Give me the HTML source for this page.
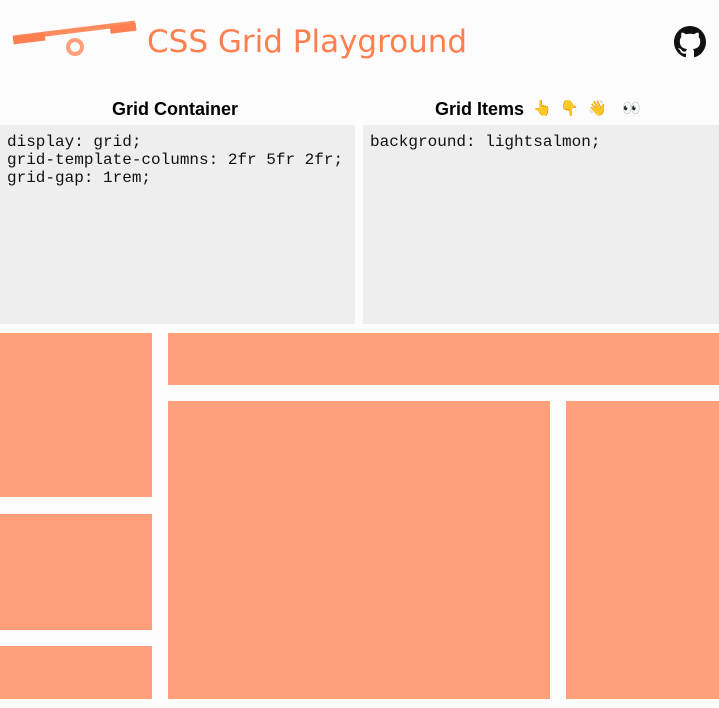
<!DOCTYPE html>
<html><head><meta charset="utf-8"><style>
body{margin:0;width:719px;height:708px;background:#fcfcfc;position:relative;overflow:hidden;font-family:"Liberation Sans",sans-serif}
.a{position:absolute}
.s{background:#ffa07a;position:absolute}
.h{position:absolute;top:99px;font-weight:bold;font-size:18px;color:#000;white-space:nowrap}
.e{position:absolute;top:99px;font-size:15px;font-family:'Noto Color Emoji',sans-serif}
.ta{position:absolute;top:125px;height:199px;background:#eeeeee;font-family:"Liberation Mono",monospace;font-size:16px;line-height:18px;padding:8px 7px;box-sizing:border-box;color:#111;white-space:pre}
</style></head><body>
<svg class="a" style="left:10px;top:18px" width="130" height="45" viewBox="0 0 130 45">
<path d="M3 20 L125 5" stroke="#ff8c5f" stroke-width="5" fill="none"/>
<rect x="3" y="17" width="32" height="8" fill="#ff7f50" transform="rotate(-7 15 20)"/>
<rect x="100" y="6" width="26" height="8" fill="#ff7f50" transform="rotate(-7 115 9)"/>
<circle cx="65" cy="29" r="7" stroke="#ffa07a" stroke-width="4" fill="none"/>
</svg>
<div class="a" style="left:147px;top:24px;font-family:'Comic Sans MS','DejaVu Sans',cursive;font-size:31px;color:#ff7f50">CSS Grid Playground</div>
<svg class="a" style="left:674px;top:26px" width="32" height="32" viewBox="0 0 16 16"><path fill="#111" d="M8 0C3.58 0 0 3.58 0 8c0 3.540 2.29 6.53 5.47 7.59.4.07.55-.17.55-.38 0-.19-.01-.82-.01-1.49-2.01.37-2.53-.49-2.690-.94-.09-.23-.48-.94-.82-1.13-.28-.15-.68-.52-.01-.53.63-.01 1.08.58 1.23.82.72 1.21 1.87.87 2.33.66.07-.52.28-.87.51-1.07-1.78-.2-3.64-.89-3.64-3.95 0-.87.31-1.59.82-2.15-.08-.2-.36-1.02.08-2.12 0 0 .67-.21 2.2.82.64-.18 1.32-.27 2-.27.68 0 1.36.09 2 .27 1.53-1.04 2.2-.82 2.2-.82.44 1.1.16 1.920.08 2.12.51.56.82 1.27.82 2.15 0 3.07-1.87 3.75-3.65 3.95.29.25.54.73.54 1.48 0 1.07-.01 1.93-.01 2.2 0 .21.15.46.55.38A8.013 8.013 0 0016 8c0-4.42-3.58-8-8-8z"/></svg>
<div class="h" style="left:112px">Grid Container</div>
<div class="h" style="left:435px">Grid Items</div>
<span class="e" style="left:533px">👆</span>
<span class="e" style="left:560px">👇</span>
<span class="e" style="left:588px">👋</span>
<span class="e" style="left:622px">👀</span>
<div class="ta" style="left:0;width:355px">display: grid;
grid-template-columns: 2fr 5fr 2fr;
grid-gap: 1rem;</div>
<div class="ta" style="left:363px;width:356px">background: lightsalmon;</div>
<div class="s" style="left:0;top:333px;width:152px;height:164px"></div>
<div class="s" style="left:0;top:514px;width:152px;height:116px"></div>
<div class="s" style="left:0;top:646px;width:152px;height:53px"></div>
<div class="s" style="left:168px;top:333px;width:551px;height:52px"></div>
<div class="s" style="left:168px;top:401px;width:382px;height:298px"></div>
<div class="s" style="left:566px;top:401px;width:153px;height:298px"></div>
</body></html>
